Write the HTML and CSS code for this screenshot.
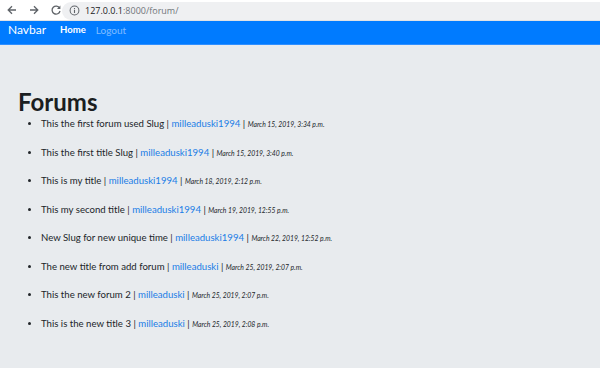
FILE: index.html
```html
<!DOCTYPE html>
<html>
<head>
<meta charset="utf-8">
<link rel="stylesheet" href="styles.css">
</head>
<body>
<div class="chrome">
  <div class="navbtns">
    <svg class="ico" viewBox="0 0 12 12" width="12" height="12"><path d="M10 6H2.5M6 2.2L2.2 6 6 9.8" fill="none" stroke="#5f6368" stroke-width="1.3"/></svg>
    <svg class="ico" viewBox="0 0 12 12" width="12" height="12"><path d="M2 6h7.5M6 2.2L9.8 6 6 9.8" fill="none" stroke="#5f6368" stroke-width="1.3"/></svg>
    <svg class="ico" viewBox="0 0 12 12" width="12" height="12"><path d="M9.6 4.2A4 4 0 1 0 10 7" fill="none" stroke="#5f6368" stroke-width="1.3"/><path d="M10.4 1.6v3.4H7z" fill="#5f6368"/></svg>
  </div>
  <div class="omnibox">
    <svg class="info" viewBox="0 0 12 12" width="11" height="11"><circle cx="6" cy="6" r="4.8" fill="none" stroke="#5f6368" stroke-width="1.1"/><path d="M6 5.2v3.4M6 3.4v1" stroke="#5f6368" stroke-width="1.2"/></svg>
    <span class="host">127.0.0.1</span><span class="path">:8000/forum/</span>
  </div>
</div>
<nav class="navbar">
  <span class="brand">Navbar</span>
  <a class="nav-link active">Home</a>
  <a class="nav-link">Logout</a>
</nav>
<main class="content">
  <h1 class="title">Forums</h1>
  <ul class="forums">
    <li>This the first forum used Slug | <a>milleaduski1994</a> | <small>March 15, 2019, 3:34 p.m.</small></li>
    <li>This the first title Slug | <a>milleaduski1994</a> | <small>March 15, 2019, 3:40 p.m.</small></li>
    <li>This is my title | <a>milleaduski1994</a> | <small>March 18, 2019, 2:12 p.m.</small></li>
    <li>This my second title | <a>milleaduski1994</a> | <small>March 19, 2019, 12:55 p.m.</small></li>
    <li>New Slug for new unique time | <a>milleaduski1994</a> | <small>March 22, 2019, 12:52 p.m.</small></li>
    <li>The new title from add forum | <a>milleaduski</a> | <small>March 25, 2019, 2:07 p.m.</small></li>
    <li>This the new forum 2 | <a>milleaduski</a> | <small>March 25, 2019, 2:07 p.m.</small></li>
    <li>This is the new title 3 | <a>milleaduski</a> | <small>March 25, 2019, 2:08 p.m.</small></li>
  </ul>
</main>
</body>
</html>
```
FILE: styles.css
```css
html, body {
  margin: 0;
  padding: 0;
  height: 100%;
}
body {
  background: #e8ebee;
  font-family: Lato, "Open Sans", sans-serif;
  color: #212529;
  overflow: hidden;
}
.chrome {
  height: 20px;
  background: #ffffff;
  display: flex;
  align-items: center;
  border-bottom: 1px solid #e0e2e5;
  font-family: "Open Sans", sans-serif;
}
.navbtns {
  display: flex;
  gap: 10px;
  padding-left: 6px;
  width: 56px;
}
.ico { display: block; }
.omnibox {
  flex: 1;
  height: 18px;
  margin-top: 1px;
  background: #eff0f2;
  border-radius: 9px 0 0 9px;
  display: flex;
  align-items: center;
  padding-left: 7px;
  font-size: 9px;
}
.info { margin-right: 5px; }
.host { color: #202124; }
.path { color: #70757a; }
.navbar {
  background: #007bff;
  border-bottom: 1px solid #2f8fff;
  display: flex;
  align-items: flex-start;
  padding: 1px 0 0 8px;
  box-sizing: border-box;
  height: 24px;
}
.brand {
  color: #fff;
  font-size: 12px;
  line-height: 16px;
  margin-right: 14px;
}
.nav-link {
  color: rgba(255,255,255,0.5);
  font-size: 10px;
  line-height: 16px;
  margin-right: 10px;
}
.nav-link.active { color: #fff; font-weight: 700; font-size: 9.5px; }
.content {
  padding-left: 18px;
}
.title {
  margin: 42px 0 0;
  font-size: 24px;
  font-weight: 700;
  line-height: 30px;
  color: #1b1e21;
}
.forums {
  margin: 0;
  padding-left: 23px;
  font-size: 9.6px;
  line-height: 14px;
}
.forums li {
  height: 14px;
  margin-bottom: 14.5px;
}
.forums a { color: #1a7de6; }
.forums small {
  font-style: italic;
  font-size: 6.8px;
  line-height: 1;
}
```
